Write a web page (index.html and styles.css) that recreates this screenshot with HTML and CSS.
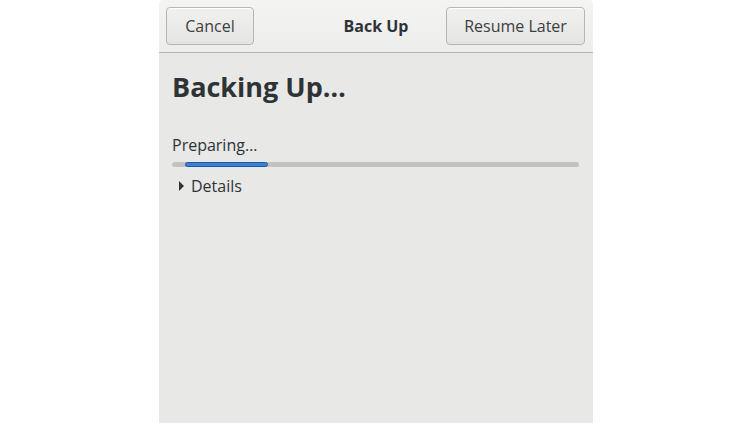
FILE: index.html
```html
<!DOCTYPE html>
<html>
<head>
<meta charset="utf-8">
<link rel="stylesheet" href="styles.css">
</head>
<body>
<div class="window">
  <header class="headerbar">
    <button class="btn btn-cancel">Cancel</button>
    <div class="title">Back Up</div>
    <button class="btn btn-later">Resume Later</button>
  </header>
  <main class="content">
    <h1 class="heading">Backing Up…</h1>
    <div class="status">Preparing…</div>
    <div class="progress"><div class="pulse"></div></div>
    <div class="expander">
      <svg class="arrow" width="7" height="10" viewBox="0 0 7 10"><path d="M1 0 L6 5 L1 10 Z" fill="#2e3436"/></svg>
      <span>Details</span>
    </div>
  </main>
</div>
</body>
</html>
```
FILE: styles.css
```css
html, body {
  margin: 0;
  padding: 0;
  background: #ffffff;
  height: 100%;
}
body {
  display: flex;
  justify-content: center;
  font-family: "Open Sans", "Noto Sans", sans-serif;
  color: #2e3436;
}
.window {
  width: 434px;
  height: 423px;
  display: flex;
  flex-direction: column;
  background: #e8e8e7;
  border-radius: 5px 5px 0 0;
  overflow: hidden;
}
.headerbar {
  height: 53px;
  flex: none;
  box-sizing: border-box;
  border-bottom: 1px solid #b6b6b3;
  background: linear-gradient(#f4f4f3, #ededec);
  display: grid;
  grid-template-columns: 1fr auto 1fr;
  align-items: center;
  padding: 0 7px 1px;
}
.btn {
  height: 38px;
  box-sizing: border-box;
  border: 1px solid #b6b6b3;
  border-radius: 4px;
  background: linear-gradient(#f1f1f0, #e4e4e2);
  box-shadow: inset 0 1px #ffffff;
  font-family: inherit;
  font-size: 16px;
  color: #3c4042;
  padding: 0;
  white-space: nowrap;
}
.btn-cancel { width: 88px; justify-self: start; }
.btn-later { width: 139px; justify-self: end; margin-right: 1px; }
.title {
  font-weight: bold;
  font-size: 16px;
  color: #2e3436;
}
.content {
  flex: 1;
  padding: 0 14px 0 13px;
}
.heading {
  margin: 16px 0 0 0;
  font-size: 27px;
  font-weight: bold;
  line-height: 36px;
  color: #2e3436;
}
.status {
  margin-top: 28px;
  font-size: 16px;
  line-height: 24px;
}
.progress {
  margin-top: 5px;
  height: 5px;
  border-radius: 3px;
  background: #c2c2bf;
  position: relative;
}
.pulse {
  position: absolute;
  left: 13px;
  top: 0;
  width: 83px;
  height: 5px;
  box-sizing: border-box;
  border-radius: 3px;
  background: #3b80d4;
  border: 1px solid #1c5aa8;
}
.expander {
  margin-top: 8px;
  display: flex;
  align-items: center;
  gap: 6px;
  padding-left: 6px;
  font-size: 16px;
  line-height: 22px;
}
```
